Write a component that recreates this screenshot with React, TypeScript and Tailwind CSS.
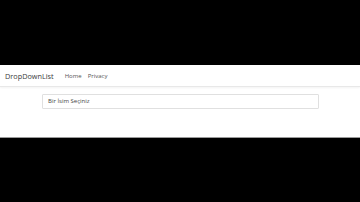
export default function App() {
  return (
    <div className="w-[360px] h-[202px] bg-black flex flex-col" style={{ fontFamily: '"Open Sans", "Noto Sans", sans-serif' }}>
      <div className="h-[65px]" />
      <div className="h-[72px] bg-white flex flex-col">
        <nav className="h-[22px] flex items-center pt-[2px] px-[5px] border-b border-[#e8e8e8] shadow-[0_1px_2px_rgba(0,0,0,0.05)]">
          <span className="text-[7.3px] text-[#3a3a3a] mr-[11px]">DropDownList</span>
          <span className="text-[6px] text-[#555] mr-[6px]">Home</span>
          <span className="text-[6px] text-[#555]">Privacy</span>
        </nav>
        <div className="pt-[7px] pl-[42px]">
          <div className="w-[277px] h-[15px] border border-[#e0e0e0] rounded-[1px] flex items-center pl-[5px]">
            <span className="text-[6px] text-[#444]">Bir İsim Seçiniz</span>
          </div>
        </div>
      </div>
      <div className="h-px bg-[#9a9a9a]" />
    </div>
  );
}
